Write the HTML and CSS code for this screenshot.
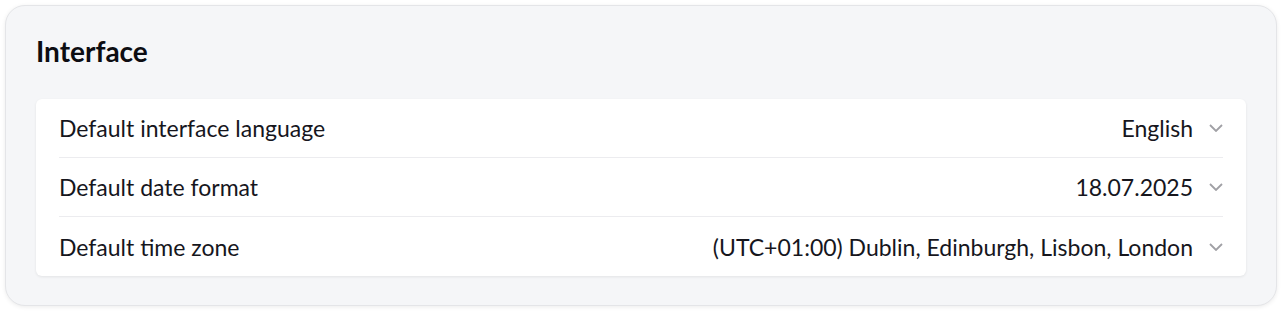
FILE: index.html
```html
<!DOCTYPE html>
<html lang="en">
<head>
    <meta charset="UTF-8">
    <meta name="viewport" content="width=device-width, initial-scale=1.0">
    <title>Interface settings</title>
    <link rel="stylesheet" href="styles.css">
</head>
<body>
    <div class="panel">
        <h1>Interface</h1>

        <div class="settings">
            <div class="setting-row">
                <span class="label">Default interface language</span>
                <span class="value">
                    English
                    <svg class="chevron" viewBox="0 0 14 8"><path d="M1 1l6 6 6-6"/></svg>
                </span>
            </div>
            <div class="setting-row">
                <span class="label">Default date format</span>
                <span class="value">
                    18.07.2025
                    <svg class="chevron" viewBox="0 0 14 8"><path d="M1 1l6 6 6-6"/></svg>
                </span>
            </div>
            <div class="setting-row">
                <span class="label">Default time zone</span>
                <span class="value">
                    (UTC+01:00) Dublin, Edinburgh, Lisbon, London
                    <svg class="chevron" viewBox="0 0 14 8"><path d="M1 1l6 6 6-6"/></svg>
                </span>
            </div>
        </div>
    </div>
</body>
</html>
```

FILE: styles.css
```css
* {
    margin: 0;
    padding: 0;
    box-sizing: border-box;
}

body {
    font-family: Lato, "Noto Sans", sans-serif;
    background-color: #fff;
    color: #16161d;
    padding: 5px 6px 6px 5px;
}

.panel {
    background-color: #f5f6f8;
    border: 1px solid #e4e5e8;
    border-radius: 20px;
    box-shadow: 0 1px 4px rgba(0, 0, 0, 0.08);
    padding: 30px 30px 29px 30px;
}

h1 {
    font-size: 28px;
    font-weight: 700;
    line-height: 30px;
    margin-bottom: 33px;
    color: #0d0d12;
}

.settings {
    background-color: #fff;
    border-radius: 6px;
    box-shadow: 0 1px 3px rgba(0, 0, 0, 0.08);
}

.setting-row {
    display: flex;
    align-items: center;
    justify-content: space-between;
    height: 59px;
    margin: 0 23px;
    border-bottom: 1px solid #ececef;
    font-size: 23px;
}

.setting-row:last-child {
    border-bottom: none;
}

.value {
    display: flex;
    align-items: center;
    gap: 16px;
}

.chevron {
    width: 14px;
    height: 8px;
    fill: none;
    stroke: #a0a0a5;
    stroke-width: 1.8;
}
```
